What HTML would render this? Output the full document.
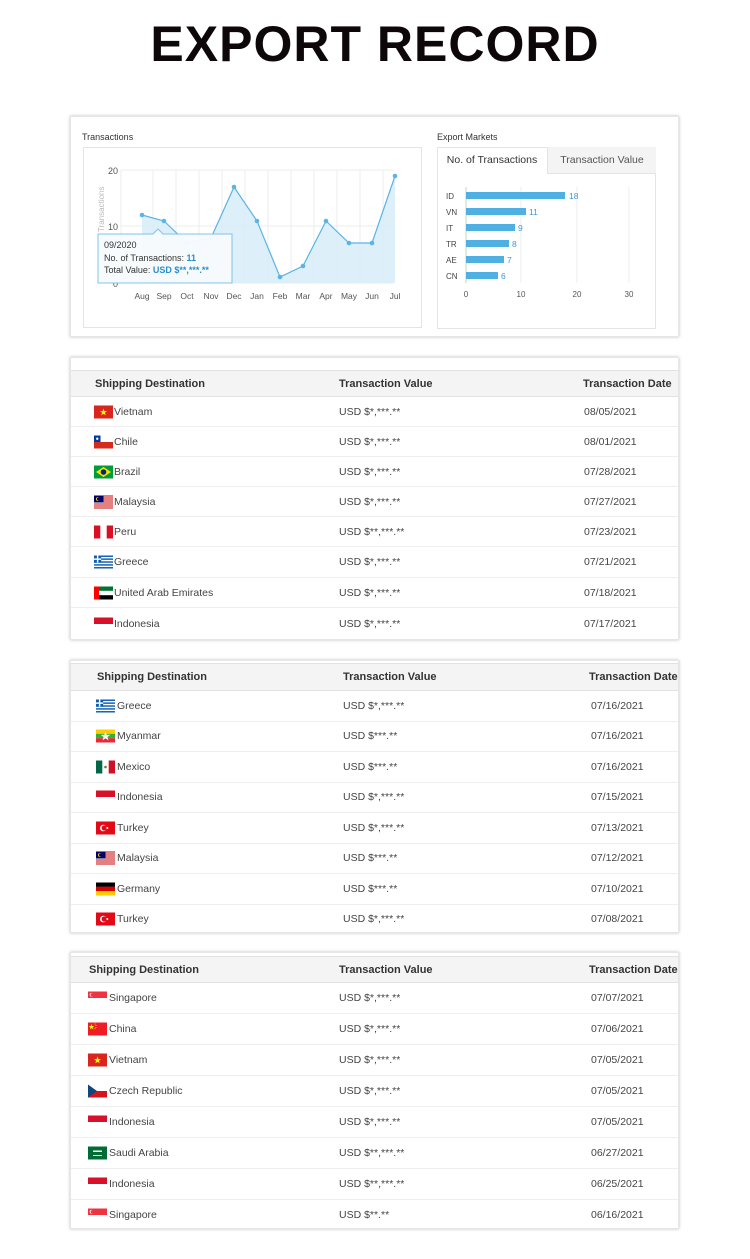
<!DOCTYPE html>
<html><head><meta charset="utf-8"><style>
*{margin:0;padding:0;box-sizing:border-box}
body{width:750px;height:1259px;background:#fff;font-family:"Liberation Sans",Arial,sans-serif;position:relative;overflow:hidden;color:#333}
.a{position:absolute}
h1{position:absolute;left:0;width:750px;top:14px;text-align:center;font-size:50px;font-weight:bold;color:#0d0709;letter-spacing:1px;line-height:60px}
.box{position:absolute;left:70px;width:609px;background:#fff;box-shadow:0 0 3px rgba(0,0,0,.25);border:1px solid #e6e6e6}
.hd{position:absolute;left:0;right:0;background:#f4f4f4;border-top:1px solid #e2e2e2;border-bottom:1px solid #e2e2e2;font-size:11px;font-weight:bold;color:#333}
.hd span,.r span{position:absolute;top:50%;transform:translateY(-50%);white-space:nowrap}
.r{position:absolute;left:0;right:0;border-bottom:1px solid #eee;font-size:10.5px;color:#444}
.r svg{position:absolute;top:50%;transform:translateY(-50%);width:19px;height:13px}
</style></head><body>
<svg width="0" height="0" style="position:absolute">
<defs>
<symbol id="vn" viewBox="0 0 19 13"><rect width="19" height="13" fill="#da251d"/><polygon points="9.5,3 10.4,5.6 13,5.6 10.9,7.2 11.7,9.8 9.5,8.2 7.3,9.8 8.1,7.2 6,5.6 8.6,5.6" fill="#ff0"/></symbol>
<symbol id="cl" viewBox="0 0 19 13"><rect width="19" height="13" fill="#fff"/><rect y="6.5" width="19" height="6.5" fill="#d52b1e"/><rect width="6.5" height="6.5" fill="#0039a6"/><circle cx="3.25" cy="3.25" r="1.2" fill="#fff"/></symbol>
<symbol id="br" viewBox="0 0 19 13"><rect width="19" height="13" fill="#009b3a"/><polygon points="9.5,1.5 17,6.5 9.5,11.5 2,6.5" fill="#fedf00"/><circle cx="9.5" cy="6.5" r="2.8" fill="#002776"/></symbol>
<symbol id="my" viewBox="0 0 19 13"><rect width="19" height="13" fill="#fff"/><g fill="#cc0001"><rect width="19" height="1"/><rect y="2" width="19" height="1"/><rect y="4" width="19" height="1"/><rect y="6" width="19" height="1"/><rect y="8" width="19" height="1"/><rect y="10" width="19" height="1"/><rect y="12" width="19" height="1"/></g><rect width="9.5" height="7" fill="#010066"/><circle cx="4" cy="3.5" r="2" fill="#fc0"/><circle cx="4.7" cy="3.5" r="1.7" fill="#010066"/></symbol>
<symbol id="pe" viewBox="0 0 19 13"><rect width="19" height="13" fill="#fff"/><rect width="6.3" height="13" fill="#d91023"/><rect x="12.7" width="6.3" height="13" fill="#d91023"/></symbol>
<symbol id="gr" viewBox="0 0 19 13"><rect width="19" height="13" fill="#fff"/><g fill="#0d5eaf"><rect width="19" height="1.45"/><rect y="2.9" width="19" height="1.45"/><rect y="5.8" width="19" height="1.45"/><rect y="8.7" width="19" height="1.45"/><rect y="11.55" width="19" height="1.45"/><rect width="7.2" height="7.2"/></g><rect x="2.9" width="1.45" height="7.2" fill="#fff"/><rect y="2.9" width="7.2" height="1.45" fill="#fff"/></symbol>
<symbol id="ae" viewBox="0 0 19 13"><rect width="19" height="13" fill="#fff"/><rect width="19" height="4.3" fill="#00732f"/><rect y="8.7" width="19" height="4.3" fill="#000"/><rect width="5" height="13" fill="#ff0000"/></symbol>
<symbol id="id" viewBox="0 0 19 13"><rect width="19" height="13" fill="#fff"/><rect width="19" height="6.5" fill="#d8102a"/></symbol>
<symbol id="mm" viewBox="0 0 19 13"><rect width="19" height="4.3" fill="#fecb00"/><rect y="4.3" width="19" height="4.4" fill="#34b233"/><rect y="8.7" width="19" height="4.3" fill="#ea2839"/><polygon points="9.5,2 10.7,5.4 14.3,5.4 11.4,7.5 12.5,10.9 9.5,8.8 6.5,10.9 7.6,7.5 4.7,5.4 8.3,5.4" fill="#fff"/></symbol>
<symbol id="mx" viewBox="0 0 19 13"><rect width="19" height="13" fill="#fff"/><rect width="6.3" height="13" fill="#006847"/><rect x="12.7" width="6.3" height="13" fill="#ce1126"/><circle cx="9.5" cy="6.5" r="1.3" fill="#8a6a3a"/></symbol>
<symbol id="tr" viewBox="0 0 19 13"><rect width="19" height="13" fill="#e30a17"/><circle cx="7.3" cy="6.5" r="3.3" fill="#fff"/><circle cx="8.2" cy="6.5" r="2.6" fill="#e30a17"/><circle cx="11.3" cy="6.5" r="1" fill="#fff"/></symbol>
<symbol id="de" viewBox="0 0 19 13"><rect width="19" height="4.4" fill="#000"/><rect y="4.3" width="19" height="4.4" fill="#dd0000"/><rect y="8.7" width="19" height="4.3" fill="#ffce00"/></symbol>
<symbol id="sg" viewBox="0 0 19 13"><rect width="19" height="13" fill="#fff"/><rect width="19" height="6.5" fill="#ef3340"/><circle cx="3.5" cy="3.2" r="1.8" fill="#fff"/><circle cx="4.2" cy="3.2" r="1.6" fill="#ef3340"/></symbol>
<symbol id="cn" viewBox="0 0 19 13"><rect width="19" height="13" fill="#ee1c25"/><polygon points="3.5,1.5 4.2,3.5 6.3,3.5 4.6,4.7 5.2,6.7 3.5,5.5 1.8,6.7 2.4,4.7 0.7,3.5 2.8,3.5" fill="#ff0"/><circle cx="7" cy="1.5" r=".5" fill="#ff0"/><circle cx="8" cy="3" r=".5" fill="#ff0"/><circle cx="8" cy="5" r=".5" fill="#ff0"/><circle cx="7" cy="6.3" r=".5" fill="#ff0"/></symbol>
<symbol id="cz" viewBox="0 0 19 13"><rect width="19" height="13" fill="#fff"/><rect y="6.5" width="19" height="6.5" fill="#d7141a"/><polygon points="0,0 9,6.5 0,13" fill="#11457e"/></symbol>
<symbol id="sa" viewBox="0 0 19 13"><rect width="19" height="13" fill="#006c35"/><rect x="5" y="4" width="9" height="1.5" fill="#fff"/><rect x="5" y="8.5" width="9" height=".8" fill="#fff"/></symbol>
</defs></svg>

<h1>EXPORT RECORD</h1>

<!-- chart panel -->
<div class="box" style="top:116px;height:221px;"></div>
<div class="a" style="left:82px;top:132px;font-size:9px;color:#333">Transactions</div>
<div class="a" style="left:437px;top:132px;font-size:9px;color:#333">Export Markets</div>
<div class="a" style="left:83px;top:147px;width:339px;height:181px;border:1px solid #e4e4e4"></div>
<div class="a" style="left:437px;top:147px;width:219px;height:182px;border:1px solid #e4e4e4"></div>
<div class="a" style="left:547px;top:147px;width:109px;height:27px;background:#f4f4f4;border-left:1px solid #e4e4e4;border-bottom:1px solid #e4e4e4;font-size:10.5px;color:#555;text-align:center;line-height:26px">Transaction Value</div>
<div class="a" style="left:437px;top:147px;width:110px;height:27px;font-size:10.5px;color:#333;text-align:center;line-height:26px">No. of Transactions</div>

<svg class="a" style="left:0;top:0" width="750" height="340" font-family="Liberation Sans, Arial, sans-serif">
<g stroke="#ececec" stroke-width="1">
<line x1="121" y1="170" x2="393" y2="170"/><line x1="121" y1="226" x2="393" y2="226"/><line x1="121" y1="283" x2="393" y2="283"/>
<line x1="121" y1="170" x2="121" y2="283"/><line x1="153" y1="170" x2="153" y2="283"/><line x1="176" y1="170" x2="176" y2="283"/><line x1="199" y1="170" x2="199" y2="283"/><line x1="222" y1="170" x2="222" y2="283"/><line x1="245" y1="170" x2="245" y2="283"/><line x1="268" y1="170" x2="268" y2="283"/><line x1="291" y1="170" x2="291" y2="283"/><line x1="314" y1="170" x2="314" y2="283"/><line x1="337" y1="170" x2="337" y2="283"/><line x1="360" y1="170" x2="360" y2="283"/><line x1="383" y1="170" x2="383" y2="283"/>
</g>
<polygon fill="#d7ecf8" opacity=".85" points="142,283 142,215 164,221 187,243 211,238 234,187 257,221 280,277 303,266 326,221 349,243 372,243 395,176 395,283"/>
<polyline fill="none" stroke="#5ab4e5" stroke-width="1.2" points="142,215 164,221 187,243 211,238 234,187 257,221 280,277 303,266 326,221 349,243 372,243 395,176"/>
<g fill="#5ab4e5"><circle cx="142" cy="215" r="2.3"/><circle cx="164" cy="221" r="2.3"/><circle cx="187" cy="243" r="2.3"/><circle cx="211" cy="238" r="2.3"/><circle cx="234" cy="187" r="2.3"/><circle cx="257" cy="221" r="2.3"/><circle cx="280" cy="277" r="2.3"/><circle cx="303" cy="266" r="2.3"/><circle cx="326" cy="221" r="2.3"/><circle cx="349" cy="243" r="2.3"/><circle cx="372" cy="243" r="2.3"/><circle cx="395" cy="176" r="2.3"/></g>
<g font-size="9" fill="#555"><text x="108" y="174">20</text><text x="108" y="230">10</text><text x="113" y="287">0</text></g>
<text x="0" y="0" font-size="8" fill="#bbb" transform="translate(104,232) rotate(-90)">Transactions</text>
<g font-size="8.5" fill="#555" text-anchor="middle"><text x="142" y="299">Aug</text><text x="164" y="299">Sep</text><text x="187" y="299">Oct</text><text x="211" y="299">Nov</text><text x="234" y="299">Dec</text><text x="257" y="299">Jan</text><text x="280" y="299">Feb</text><text x="303" y="299">Mar</text><text x="326" y="299">Apr</text><text x="349" y="299">May</text><text x="372" y="299">Jun</text><text x="395" y="299">Jul</text></g>
<!-- tooltip -->
<path d="M98,234 H153 L158,229 L163,234 H232 V283 H98 Z" fill="#f7fbfd" stroke="#7cc3e8" stroke-width="1" opacity=".97"/>
<g font-size="9" fill="#333"><text x="104" y="248">09/2020</text><text x="104" y="261">No. of Transactions: <tspan fill="#2a8fd0" font-weight="bold">11</tspan></text><text x="104" y="273">Total Value: <tspan fill="#2a8fd0" font-weight="bold">USD $**,***.**</tspan></text></g>
<!-- bar chart -->
<g stroke="#eee"><line x1="521" y1="187" x2="521" y2="283"/><line x1="577" y1="187" x2="577" y2="283"/><line x1="629" y1="187" x2="629" y2="283"/></g>
<line x1="466" y1="187" x2="466" y2="283" stroke="#ccc"/>
<g fill="#4fb0e3"><rect x="466" y="192" width="99" height="7"/><rect x="466" y="208" width="60" height="7"/><rect x="466" y="224" width="49" height="7"/><rect x="466" y="240" width="43" height="7"/><rect x="466" y="256" width="38" height="7"/><rect x="466" y="272" width="32" height="7"/></g>
<g font-size="8" fill="#444"><text x="446" y="199">ID</text><text x="446" y="215">VN</text><text x="446" y="231">IT</text><text x="446" y="247">TR</text><text x="446" y="263">AE</text><text x="446" y="279">CN</text></g>
<g font-size="8.5" fill="#3a9ad9"><text x="569" y="199">18</text><text x="529" y="215">11</text><text x="518" y="231">9</text><text x="512" y="247">8</text><text x="507" y="263">7</text><text x="501" y="279">6</text></g>
<g font-size="8" fill="#555" text-anchor="middle"><text x="466" y="297">0</text><text x="521" y="297">10</text><text x="577" y="297">20</text><text x="629" y="297">30</text></g>
</svg>

<!-- table 1 -->
<div class="box" style="top:357px;height:283px">
<div class="hd" style="top:12px;height:27px"><span style="left:24px">Shipping Destination</span><span style="left:268px">Transaction Value</span><span style="left:512px">Transaction Date</span></div>
<div class="r" style="top:39px;height:30px"><svg style="left:23px"><use href="#vn"/></svg><span style="left:43px">Vietnam</span><span style="left:268px">USD $*,***.**</span><span style="left:513px">08/05/2021</span></div>
<div class="r" style="top:69px;height:30px"><svg style="left:23px"><use href="#cl"/></svg><span style="left:43px">Chile</span><span style="left:268px">USD $*,***.**</span><span style="left:513px">08/01/2021</span></div>
<div class="r" style="top:99px;height:30px"><svg style="left:23px"><use href="#br"/></svg><span style="left:43px">Brazil</span><span style="left:268px">USD $*,***.**</span><span style="left:513px">07/28/2021</span></div>
<div class="r" style="top:129px;height:30px"><svg style="left:23px"><use href="#my"/></svg><span style="left:43px">Malaysia</span><span style="left:268px">USD $*,***.**</span><span style="left:513px">07/27/2021</span></div>
<div class="r" style="top:159px;height:30px"><svg style="left:23px"><use href="#pe"/></svg><span style="left:43px">Peru</span><span style="left:268px">USD $**,***.**</span><span style="left:513px">07/23/2021</span></div>
<div class="r" style="top:189px;height:31px"><svg style="left:23px"><use href="#gr"/></svg><span style="left:43px">Greece</span><span style="left:268px">USD $*,***.**</span><span style="left:513px">07/21/2021</span></div>
<div class="r" style="top:220px;height:30px"><svg style="left:23px"><use href="#ae"/></svg><span style="left:43px">United Arab Emirates</span><span style="left:268px">USD $*,***.**</span><span style="left:513px">07/18/2021</span></div>
<div class="r" style="top:250px;height:31px;border:0"><svg style="left:23px"><use href="#id"/></svg><span style="left:43px">Indonesia</span><span style="left:268px">USD $*,***.**</span><span style="left:513px">07/17/2021</span></div>
</div>

<!-- table 2 -->
<div class="box" style="top:660px;height:273px">
<div class="hd" style="top:2px;height:28px"><span style="left:26px">Shipping Destination</span><span style="left:272px">Transaction Value</span><span style="left:518px">Transaction Date</span></div>
<div class="r" style="top:30px;height:30.5px"><svg style="left:25px"><use href="#gr"/></svg><span style="left:46px">Greece</span><span style="left:272px">USD $*,***.**</span><span style="left:520px">07/16/2021</span></div>
<div class="r" style="top:60.5px;height:30.5px"><svg style="left:25px"><use href="#mm"/></svg><span style="left:46px">Myanmar</span><span style="left:272px">USD $***.**</span><span style="left:520px">07/16/2021</span></div>
<div class="r" style="top:91px;height:30.5px"><svg style="left:25px"><use href="#mx"/></svg><span style="left:46px">Mexico</span><span style="left:272px">USD $***.**</span><span style="left:520px">07/16/2021</span></div>
<div class="r" style="top:121.5px;height:30.5px"><svg style="left:25px"><use href="#id"/></svg><span style="left:46px">Indonesia</span><span style="left:272px">USD $*,***.**</span><span style="left:520px">07/15/2021</span></div>
<div class="r" style="top:152px;height:30.5px"><svg style="left:25px"><use href="#tr"/></svg><span style="left:46px">Turkey</span><span style="left:272px">USD $*,***.**</span><span style="left:520px">07/13/2021</span></div>
<div class="r" style="top:182.5px;height:30.5px"><svg style="left:25px"><use href="#my"/></svg><span style="left:46px">Malaysia</span><span style="left:272px">USD $***.**</span><span style="left:520px">07/12/2021</span></div>
<div class="r" style="top:213px;height:30.5px"><svg style="left:25px"><use href="#de"/></svg><span style="left:46px">Germany</span><span style="left:272px">USD $***.**</span><span style="left:520px">07/10/2021</span></div>
<div class="r" style="top:243.5px;height:28px;border:0"><svg style="left:25px"><use href="#tr"/></svg><span style="left:46px">Turkey</span><span style="left:272px">USD $*,***.**</span><span style="left:520px">07/08/2021</span></div>
</div>

<!-- table 3 -->
<div class="box" style="top:952px;height:277px">
<div class="hd" style="top:3px;height:27px"><span style="left:18px">Shipping Destination</span><span style="left:268px">Transaction Value</span><span style="left:518px">Transaction Date</span></div>
<div class="r" style="top:30px;height:31px"><svg style="left:17px"><use href="#sg"/></svg><span style="left:38px">Singapore</span><span style="left:268px">USD $*,***.**</span><span style="left:520px">07/07/2021</span></div>
<div class="r" style="top:61px;height:31px"><svg style="left:17px"><use href="#cn"/></svg><span style="left:38px">China</span><span style="left:268px">USD $*,***.**</span><span style="left:520px">07/06/2021</span></div>
<div class="r" style="top:92px;height:31px"><svg style="left:17px"><use href="#vn"/></svg><span style="left:38px">Vietnam</span><span style="left:268px">USD $*,***.**</span><span style="left:520px">07/05/2021</span></div>
<div class="r" style="top:123px;height:31px"><svg style="left:17px"><use href="#cz"/></svg><span style="left:38px">Czech Republic</span><span style="left:268px">USD $*,***.**</span><span style="left:520px">07/05/2021</span></div>
<div class="r" style="top:154px;height:31px"><svg style="left:17px"><use href="#id"/></svg><span style="left:38px">Indonesia</span><span style="left:268px">USD $*,***.**</span><span style="left:520px">07/05/2021</span></div>
<div class="r" style="top:185px;height:31px"><svg style="left:17px"><use href="#sa"/></svg><span style="left:38px">Saudi Arabia</span><span style="left:268px">USD $**,***.**</span><span style="left:520px">06/27/2021</span></div>
<div class="r" style="top:216px;height:31px"><svg style="left:17px"><use href="#id"/></svg><span style="left:38px">Indonesia</span><span style="left:268px">USD $**,***.**</span><span style="left:520px">06/25/2021</span></div>
<div class="r" style="top:247px;height:30px;border:0"><svg style="left:17px"><use href="#sg"/></svg><span style="left:38px">Singapore</span><span style="left:268px">USD $**.**</span><span style="left:520px">06/16/2021</span></div>
</div>
</body></html>
